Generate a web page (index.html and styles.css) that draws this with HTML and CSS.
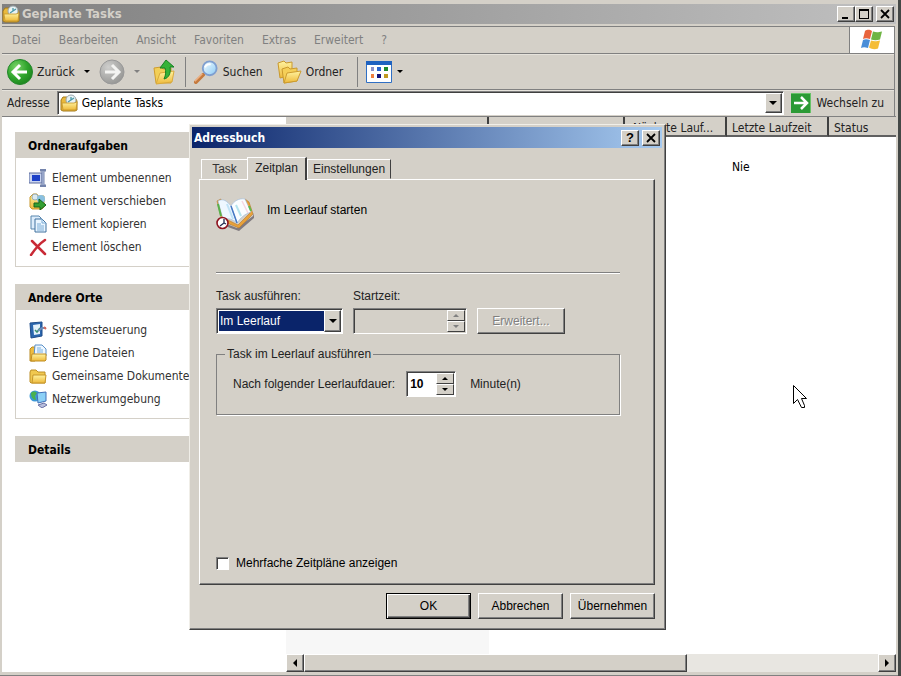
FILE: index.html
```html
<!DOCTYPE html>
<html lang="de">
<head>
<meta charset="utf-8">
<title>Geplante Tasks</title>
<link rel="stylesheet" href="styles.css">
</head>
<body>
<svg class="defs" aria-hidden="true">
  <defs>
    <linearGradient id="gold" x1="0" y1="0" x2="0" y2="1"><stop offset="0" stop-color="#fff3a0"/><stop offset="1" stop-color="#eeb93a"/></linearGradient>
    <radialGradient id="green" cx=".35" cy=".3" r=".8"><stop offset="0" stop-color="#7bd46a"/><stop offset=".55" stop-color="#2fa52c"/><stop offset="1" stop-color="#1a7f1c"/></radialGradient>
    <radialGradient id="grey" cx=".35" cy=".3" r=".8"><stop offset="0" stop-color="#cfcfcd"/><stop offset="1" stop-color="#929290"/></radialGradient>
    <linearGradient id="glass" x1="0" y1="0" x2="1" y2="1"><stop offset="0" stop-color="#f4fcff"/><stop offset="1" stop-color="#8ccbf5"/></linearGradient>
    <symbol id="tasks" viewBox="0 0 18 18">
      <path d="M1 6l2-3h4l1 2h8l1 2v9l-2 1H3l-2-1z" fill="#e9b93c" stroke="#a47a1c"/>
      <circle cx="11" cy="6" r="5" fill="#e8f2f4" stroke="#9aa6ac"/>
      <path d="M11 3v3l-3 2M11 6l3-2" fill="none" stroke="#4b98a8" stroke-width="1.3"/>
      <path d="M2 9h12l3-1-1 8H3z" fill="url(#gold)" stroke="#c4942a" stroke-width=".8"/>
    </symbol>
  </defs>
</svg>
<main class="window">
  <header class="titlebar">
    <svg class="i18"><use href="#tasks"/></svg>
    <h1>Geplante Tasks</h1>
    <div class="captions">
      <button class="cap" aria-label="Minimieren"><svg viewBox="0 0 14 12"><path d="M3 9h6v2H3z"/></svg></button>
      <button class="cap" aria-label="Maximieren"><svg viewBox="0 0 14 12"><path d="M2 1h10v10H2zM3 3v7h8V3z" fill-rule="evenodd"/></svg></button>
      <button class="cap close" aria-label="Schließen"><svg viewBox="0 0 14 12"><path d="M3 2l8 8M11 2l-8 8" stroke="#000" stroke-width="1.8"/></svg></button>
    </div>
  </header>
  <div class="menurow">
    <nav class="menu">
      <button>Datei</button><button>Bearbeiten</button><button>Ansicht</button><button>Favoriten</button><button>Extras</button><button>Erweitert</button><button>?</button>
    </nav>
    <div class="flag">
      <svg viewBox="0 0 24 22">
        <path d="M5 2c3-2 5-1 7 0l-2 8c-3-1-5-1-7 0z" fill="#e8643c"/>
        <path d="M13 2.500c3 1 5 1 9 0l-2 8c-3 1-6 1-9 0z" fill="#6fb544"/>
        <path d="M3 11c2-1 4-1 7 0l-2 8c-3-1-5-1-7 0z" fill="#4a8ed8"/>
        <path d="M11 11.500c3 1 5 1 9 0l-2 8c-3 1-6 1-9-1z" fill="#f5bd35"/>
      </svg>
    </div>
  </div>
  <div class="toolbar">
    <button class="tool"><svg class="i26" viewBox="0 0 26 26"><circle cx="13" cy="13" r="12.500" fill="url(#green)" stroke="#23862a"/><path d="M13 6l-7 7 7 7M7 13h13" fill="none" stroke="#fff" stroke-width="3"/></svg><span>Zurück</span><i class="drop"></i></button>
    <button class="tool forward" aria-label="Vorwärts"><svg class="i26" viewBox="0 0 26 26"><circle cx="13" cy="13" r="12" fill="url(#grey)" stroke="#999"/><path d="M13 6l7 7-7 7M19 13H6" fill="none" stroke="#f4f4f2" stroke-width="3"/></svg><i class="drop dim"></i></button>
    <button class="tool up" aria-label="Aufwärts"><svg class="i26" viewBox="0 0 26 26"><path d="M2 9l7-1 2 2 8-1v15H4z" fill="#f2cf58" stroke="#d09d2e"/><path d="M4 25l4-11 14-2-2 11z" fill="url(#gold)" stroke="#d9aa3c"/><path d="M14 1l8 7h-4c1 6-1 11-6 12 2-4 2-8 1-11H8z" fill="#35b338" stroke="#168022"/></svg></button>
    <span class="sep"></span>
    <button class="tool search"><svg class="i26" viewBox="0 0 26 26"><path d="M2 24l8-8" stroke="#c57a3e" stroke-width="4" stroke-linecap="round"/><path d="M1 23l8-8" stroke="#efb083" stroke-width="1.500"/><circle cx="17" cy="9" r="7.500" fill="url(#glass)" stroke="#7f9fd0" stroke-width="2"/><path d="M12 8c1-3 4-4 6-3" fill="none" stroke="#fff" stroke-width="2"/></svg><span>Suchen</span></button>
    <button class="tool folders"><svg class="i26" viewBox="0 0 26 26"><path d="M2 4l6-2 2 2 6-1v13L4 19z" fill="url(#gold)" stroke="#c9992e"/><path d="M6 10l6-2 2 2 7-1v13L8 24z" fill="#f5cf58" stroke="#c9992e"/><path d="M8 24l3-10 14-2-4 10z" fill="url(#gold)" stroke="#cc9c30"/></svg><span>Ordner</span></button>
    <span class="sep wide"></span>
    <button class="tool views" aria-label="Ansichten"><svg class="i26" viewBox="0 0 26 22"><path d="M.5.5h25v21H.5z" fill="#fff" stroke="#2f6fc4"/><path d="M0 0h26v4H0z" fill="#1e62c0"/><path d="M5 6h3v4H5z" fill="#8a8fc8"/><path d="M11 6h4v4h-4z" fill="#2a66d0"/><path d="M18 6h4v4h-4z" fill="#1d8a2c"/><path d="M5 13h3v4H5z" fill="#f08040"/><path d="M11 13h4v4h-4z" fill="#14147c"/><path d="M18 13h4v4h-4z" fill="#c09a20"/></svg><i class="drop"></i></button>
  </div>
  <div class="address">
    <label for="addr">Adresse</label>
    <div class="addrbox">
      <svg class="i18"><use href="#tasks"/></svg>
      <input id="addr" type="text" value="Geplante Tasks">
      <button class="arrow" aria-label="Adressliste"><i class="tri down"></i></button>
    </div>
    <button class="go"><svg viewBox="0 0 20 20"><path d="M0 0h20v20H0z" fill="#2b9a35"/><path d="M0 0h20v20" fill="none" stroke="#66c267" stroke-width="2"/><path d="M10 4l6 6-6 6M15 10H3" fill="none" stroke="#fff" stroke-width="2.500"/></svg><span>Wechseln zu</span></button>
  </div>
  <div class="content">
    <aside class="side">
      <section class="panel">
        <h2>Ordneraufgaben</h2>
        <ul>
          <li><svg viewBox="0 0 18 18"><path d="M0 4h13v10H0z" fill="#c9d4f0" stroke="#5a6a9c"/><path d="M3 6h8v6H3z" fill="#1c40c8"/><path d="M11 1h6M14 1v16M11 17h6" stroke="#7484ac" stroke-width="3"/><path d="M14 2v14" stroke="#b7c4e4"/></svg><a href="#">Element umbenennen</a></li>
          <li><svg viewBox="0 0 18 18"><path d="M1 5l3-3h4l1 2h6v11l-2 2H3l-2-2z" fill="url(#gold)" stroke="#c9992e"/><circle cx="6" cy="5" r="3" fill="#dbe9ef" stroke="#9ab0ba"/><circle cx="12" cy="7" r="4" fill="#8ac0e0"/><path d="M5 11h5V7l7 6-6 5v-3H5z" fill="#35a032" stroke="#17641b"/></svg><a href="#">Element verschieben</a></li>
          <li><svg viewBox="0 0 18 18"><path d="M2 1h8l2 2v11H2z" fill="#dcecfb" stroke="#5785ad"/><path d="M6 4h7l4 4v9H6z" fill="#e9f5ff" stroke="#3f719e"/><path d="M13 4v4h4M8 9h4M8 11h7M8 13h7M8 15h7" fill="none" stroke="#7bacd6"/></svg><a href="#">Element kopieren</a></li>
          <li><svg viewBox="0 0 18 18"><path d="M3 3c4 4 8 8 13 13M16 2C10 6 6 11 2 17" fill="none" stroke="#c92a36" stroke-width="2.500" stroke-linecap="round"/></svg><a href="#">Element löschen</a></li>
        </ul>
      </section>
      <section class="panel">
        <h2>Andere Orte</h2>
        <ul>
          <li><svg viewBox="0 0 18 18"><path d="M1 2l12-1v14L2 17z" fill="#2a66ae" stroke="#1f4c8a"/><path d="M4 4l7-1v10l-6 1z" fill="#e4f1fb"/><path d="M6 9l2 2 3-4" fill="none" stroke="#37906f" stroke-width="1.500"/><path d="M9 10l4-3h4" fill="none" stroke="#6d8cb8" stroke-width="2"/><path d="M15 6l2 2" stroke="#d76a5a" stroke-width="2"/></svg><a href="#">Systemsteuerung</a></li>
          <li><svg viewBox="0 0 18 18"><path d="M1 5l2-2h3v14H1z" fill="#eebc40" stroke="#b98a22"/><path d="M6 1h7l4 4v7H5z" fill="#eef7ff" stroke="#5a90c8"/><path d="M8 4h4M8 6h6M8 8h6" stroke="#78b0e2"/><path d="M3 10h14v6l-1 1H2z" fill="url(#gold)" stroke="#c08d22"/></svg><a href="#">Eigene Dateien</a></li>
          <li><svg viewBox="0 0 18 18"><path d="M1 5l1-2h5l2 2h7v11H2l-1-1z" fill="#f0c850" stroke="#bd8f26"/><path d="M4 8h13l-1 8H3z" fill="url(#gold)" stroke="#c6962a"/></svg><a href="#">Gemeinsame Dokumente</a></li>
          <li><svg viewBox="0 0 18 18"><circle cx="6" cy="6" r="5.500" fill="#3b98d6"/><path d="M2 3c3-3 5-1 6 0L6 6l1 4c-3 0-5-3-5-7z" fill="#49b150"/><path d="M8 3l9-1v9l-8 2z" fill="#8bd0f6" stroke="#4170b8"/><path d="M9 15l6-2 3 2-5 3z" fill="#b8bedc" stroke="#6971a6"/></svg><a href="#">Netzwerkumgebung</a></li>
        </ul>
      </section>
      <section class="panel"><h2>Details</h2></section>
    </aside>
    <section class="list">
      <table>
        <colgroup><col class="c-name"><col class="c-plan"><col class="c-time"><col class="c-time"><col></colgroup>
        <thead><tr><th></th><th></th><th>Nächste Lauf...</th><th>Letzte Laufzeit</th><th>Status</th></tr></thead>
        <tbody><tr><td></td><td></td><td></td><td>Nie</td><td></td></tr></tbody>
      </table>
      <div class="scroll">
        <button class="sb" aria-label="Nach links"><i class="tri left"></i></button>
        <div class="thumb"></div>
        <div class="track"></div>
        <button class="sb" aria-label="Nach rechts"><i class="tri right"></i></button>
      </div>
    </section>
  </div>
</main>

<form class="dialog" role="dialog" aria-labelledby="dlg">
  <header class="dlgtitle">
    <h2 id="dlg">Adressbuch</h2>
    <div class="captions">
      <button type="button" class="cap help" aria-label="Hilfe">?</button>
      <button type="button" class="cap close" aria-label="Dialog schließen"><svg viewBox="0 0 14 12"><path d="M3 2l8 8M11 2l-8 8" stroke="#000" stroke-width="1.8"/></svg></button>
    </div>
  </header>
  <div class="tabs" role="tablist">
    <button type="button" role="tab">Task</button>
    <button type="button" role="tab" class="active" aria-selected="true">Zeitplan</button>
    <button type="button" role="tab">Einstellungen</button>
  </div>
  <div class="page">
    <div class="summary">
      <svg viewBox="0 0 38 34">
        <path d="M8 26l13 5 16-12 1-3v5L23 34 9 29z" fill="#5d5660" opacity=".7"/>
        <path d="M1 4l4-2 5 20 12 6 12-12-5-14 4 3 4 12-14 14-17-7z" fill="#e8a23a" stroke="#b8752a" stroke-width=".6"/>
        <path d="M2 4c5-3 9 0 13 5l6 17c-4-4-9-5-14-4z" fill="#eef7ff" stroke="#9bb8dc" stroke-width=".6"/>
        <path d="M15 9c3-5 8-8 14-7l6 13c-6 2-10 5-14 11z" fill="#fafdff" stroke="#9bb8dc" stroke-width=".6"/>
        <path d="M15 9l6 17" stroke="#4478c4" stroke-width="1.500"/>
        <path d="M11 7l6 15" stroke="#bfe2f6" stroke-width="2"/>
        <path d="M20 8l5 11" stroke="#b4e4ee" stroke-width="2"/>
        <path d="M26 4l6 12" stroke="#f6d8e4" stroke-width="1.500"/>
        <path d="M2 7l3 12" stroke="#58b04c" stroke-width="2"/>
        <path d="M33 9l2 5" stroke="#5dbb50" stroke-width="2"/>
        <circle cx="6.500" cy="26" r="5.500" fill="#fff" stroke="#8e1420" stroke-width="1.600"/>
        <path d="M8 22v4l-4 3M8 26l2 1" fill="none" stroke="#222a50" stroke-width="1.300"/>
      </svg>
      <p>Im Leerlauf starten</p>
    </div>
    <hr>
    <div class="fields">
      <div class="field kind">
        <label for="kind">Task ausführen:</label>
        <div class="box">
          <select id="kind"><option>Im Leerlauf</option></select>
          <span class="arrow"><i class="tri down"></i></span>
        </div>
      </div>
      <div class="field start">
        <label for="start">Startzeit:</label>
        <div class="box off">
          <input id="start" type="text" disabled>
          <span class="spin"><button type="button" disabled aria-label="Später"><i class="tri mini-up"></i></button><button type="button" disabled aria-label="Früher"><i class="tri mini-down"></i></button></span>
        </div>
      </div>
      <button type="button" class="btn" disabled>Erweitert...</button>
    </div>
    <fieldset>
      <legend>Task im Leerlauf ausführen</legend>
      <label for="mins">Nach folgender Leerlaufdauer:</label>
      <div class="box mins">
        <input id="mins" type="text" value="10">
        <span class="spin"><button type="button" aria-label="Mehr"><i class="tri mini-up"></i></button><button type="button" aria-label="Weniger"><i class="tri mini-down"></i></button></span>
      </div>
      <span>Minute(n)</span>
    </fieldset>
    <div class="multi"><input type="checkbox" id="multi"><label for="multi">Mehrfache Zeitpläne anzeigen</label></div>
  </div>
  <footer>
    <button type="button" class="btn default">OK</button>
    <button type="button" class="btn">Abbrechen</button>
    <button type="button" class="btn">Übernehmen</button>
  </footer>
</form>
<svg class="cursor" viewBox="0 0 14 24" aria-hidden="true"><path d="M.5.5v18l4-4 4 8h3v-2l-3-7h5z" fill="#fff" stroke="#000"/></svg>
</body>
</html>
```
FILE: styles.css
```css
* { box-sizing: border-box; }
:root { --face: #d4d0c8; --shade: #808080; --dark: #404040; }
body {
  margin: 0;
  min-height: 100vh;
  display: flex;
  background: #444846;
  color: #222;
  font: 12px/16px "DejaVu Sans Condensed", "DejaVu Sans", sans-serif;
  overflow: hidden;
}
button, input, select { font: inherit; color: inherit; margin: 0; padding: 0; border: 0; border-radius: 0; background: none; }
h1, h2, p, ul { margin: 0; padding: 0; }
svg { display: block; flex: none; }
.defs { position: absolute; width: 0; height: 0; }
.i18 { width: 18px; height: 18px; }
.i26 { width: 26px; height: 26px; }

.window {
  flex: 1;
  display: flex;
  flex-direction: column;
  margin-right: 3px;
  padding: 4px 2px 3px;
  background: var(--face);
  border-bottom: 1px solid var(--shade);
}
.titlebar {
  display: flex;
  align-items: center;
  gap: 2px;
  height: 20px;
  padding-right: 2px;
  background: linear-gradient(to right, #808080, #c0c0c0);
}
.titlebar h1 { flex: 1; color: var(--face); font-size: 13px; line-height: 20px; }
.captions { display: flex; }
.cap {
  display: flex;
  justify-content: center;
  align-items: center;
  width: 18px;
  height: 16px;
  background: var(--face);
  border: 1px solid;
  border-color: #fff var(--dark) var(--dark) #fff;
  box-shadow: inset -1px -1px var(--shade);
}
.cap svg { width: 14px; height: 12px; }
.close { margin-left: 3px; }
.help { color: #000; font-weight: bold; font-size: 13px; }

.menurow, .toolbar, .address {
  display: flex;
  margin-right: 1px;
  border-top: 1px solid var(--shade);
  border-right: 1px solid var(--shade);
}
.menurow { height: 27px; margin-top: 2px; }
.menu { flex: 1; display: flex; gap: 18px; padding-left: 10px; }
.menu button { color: #808080; }
.flag { width: 45px; display: flex; justify-content: center; align-items: center; background: #fff; border-left: 1px solid var(--shade); }
.flag svg { width: 24px; height: 22px; }
.toolbar { height: 36px; align-items: center; padding-left: 5px; box-shadow: inset 0 1px #e6e3dc; }
.tool { display: flex; align-items: center; gap: 4px; }
.drop { margin-left: 5px; border: 3px solid transparent; border-top-color: #000; border-bottom: 0; }
.dim { border-top-color: var(--shade); }
.forward { margin-left: 9px; }
.up { margin-left: 12px; }
.sep { width: 1px; height: 30px; margin: 0 7px; background: var(--shade); }
.wide { margin: 0 8px 0 14px; }
.folders { margin-left: 13px; }
.sep + .tool .i26 { height: 24px; }
.views { gap: 0; }
.address { height: 27px; align-items: center; gap: 7px; padding: 0 10px 0 5px; box-shadow: inset 0 1px #e6e3dc; }
.addrbox {
  flex: 1;
  display: flex;
  align-items: center;
  gap: 4px;
  height: 24px;
  padding: 1px 1px 1px 2px;
  background: #fff;
  border: 1px solid;
  border-color: var(--shade) #fff #fff var(--shade);
  box-shadow: inset 1px 1px var(--dark);
}
.addrbox input { flex: 1; min-width: 0; color: #000; }
.arrow {
  display: flex;
  justify-content: center;
  align-items: center;
  align-self: stretch;
  width: 17px;
  background: var(--face);
  border: 1px solid;
  border-color: #fff var(--dark) var(--dark) #fff;
  box-shadow: inset -1px -1px var(--shade);
}
.tri { border: 0 solid transparent; }
.down { border-width: 4px 4px 0; border-top-color: #000; }
.left { border-width: 4px 4px 4px 0; border-right-color: #000; }
.right { border-width: 4px 0 4px 4px; border-left-color: #000; }
.mini-up { border-width: 0 3px 3px; border-bottom-color: #000; }
.mini-down { border-width: 3px 3px 0; border-top-color: #000; }
.go { display: flex; align-items: center; gap: 6px; }
.go svg { width: 20px; height: 20px; }

.content { flex: 1; display: flex; background: #fff; border-top: 1px solid var(--shade); }
.side { flex: none; width: 284px; padding: 15px 13px; display: flex; flex-direction: column; gap: 17px; }
.panel h2 { padding: 6px 13px 4px; background: var(--face); color: #000; font-size: 12px; line-height: 16px; }
.panel ul { list-style: none; padding: 8px 13px; border: 1px solid var(--face); border-top: 0; }
.panel li { display: flex; align-items: center; gap: 5px; height: 23px; }
.panel li svg { width: 18px; height: 18px; }
.panel a { color: #333; text-decoration: none; white-space: nowrap; }

.list {
  flex: 1;
  min-width: 0;
  display: flex;
  flex-direction: column;
  justify-content: space-between;
  background: linear-gradient(#f7f7f7, #f7f7f7) no-repeat 0 0 / 203px 100%;
}
table { width: 100%; table-layout: fixed; border-collapse: separate; border-spacing: 0; }
.c-name { width: 203px; }
.c-plan { width: 136px; }
.c-time { width: 102px; }
th, td { padding: 0 0 0 5px; text-align: left; font-weight: normal; white-space: nowrap; overflow: hidden; }
th { height: 20px; padding-top: 5px; line-height: 13px; background: var(--face); border-right: 2px solid var(--dark); border-bottom: 2px solid #606060; }
th:nth-child(3) { padding-left: 8px; }
th:last-child { border-right: 0; }
td { height: 60px; color: #000; }
.scroll { display: flex; height: 18px; background: #e8e6e1; }
.sb, .thumb { background: var(--face); border: 1px solid; border-color: #fff var(--dark) var(--dark) #fff; box-shadow: inset -1px -1px var(--shade); }
.sb { display: flex; justify-content: center; align-items: center; width: 18px; }
.thumb { flex: 382; }
.track { flex: 192; }

.dialog {
  position: absolute;
  left: 189px;
  top: 124px;
  width: 477px;
  padding: 2px 3px 2px 2px;
  background: var(--face);
  border: 1px solid;
  border-color: #f0eee8 var(--dark) var(--dark) #f0eee8;
  box-shadow: inset -1px -1px var(--shade);
  font: 12px/16px "Liberation Sans", Arial, sans-serif;
}
.dlgtitle { display: flex; align-items: center; height: 21px; padding: 0 2px 0 2px; background: linear-gradient(to right, #0a246a, #a6caf0); }
.dlgtitle h2 { flex: 1; color: #fff; font: bold 12px/20px "DejaVu Sans Condensed", "DejaVu Sans", sans-serif; }
.tabs { display: flex; align-items: flex-end; margin: 9px 9px 0; }
.tabs button { height: 20px; padding: 0 5px; background: var(--face); border: 1px solid; border-color: #fff var(--dark) transparent #fff; }
.tabs button:first-child { width: 46px; border-right: 0; color: #333; }
.tabs .active { width: 60px; height: 23px; margin-bottom: -1px; padding-bottom: 3px; z-index: 1; border-right-width: 2px; border-bottom: 0; }
.page {
  display: flex;
  flex-direction: column;
  min-height: 406px;
  margin: 0 7px;
  padding: 17px 34px 13px 16px;
  border: 1px solid;
  border-color: #fff var(--dark) var(--dark) #fff;
  box-shadow: inset -1px -1px var(--shade);
}
.summary { display: flex; gap: 13px; height: 75px; color: #000; }
.summary svg { width: 38px; height: 34px; }
.summary p { padding-top: 5px; }
hr { width: 100%; height: 2px; margin: 0; border: 0; background: linear-gradient(var(--shade) 50%, #fff 50%); }
.fields { display: flex; align-items: flex-end; gap: 10px; margin-top: 14px; }
.field { display: flex; flex-direction: column; gap: 4px; }
.kind { width: 127px; }
.start { width: 114px; }
.box {
  display: flex;
  height: 26px;
  padding: 1px;
  background: #fff;
  border: 1px solid;
  border-color: var(--shade) #fff #fff var(--shade);
  box-shadow: inset 1px 1px var(--dark);
}
.box input, .box select { flex: 1; min-width: 0; width: 0; }
.box.off { background: var(--face); }
.box select { appearance: none; margin: 1px 0 1px 1px; padding-left: 1px; background: #0a246a; color: #fff; }
.spin { display: flex; flex-direction: column; width: 18px; }
.spin button { flex: 1; display: flex; justify-content: center; align-items: center; background: var(--face); border: 1px solid; border-color: #fff var(--dark) var(--dark) #fff; }
.spin button:disabled .mini-up { border-bottom-color: var(--shade); }
.spin button:disabled .mini-down { border-top-color: var(--shade); }
.btn { width: 85px; height: 26px; background: var(--face); border: 1px solid; border-color: #fff var(--dark) var(--dark) #fff; box-shadow: inset -1px -1px var(--shade); color: #000; }
.fields .btn { width: 88px; }
.btn:disabled { color: var(--shade); text-shadow: 1px 1px #fff; }
.default { border-color: #000; box-shadow: inset 1px 1px #fff, inset -1px -1px var(--dark), inset -2px -2px var(--shade); }
fieldset { display: flex; align-items: center; margin: 12px 0 0; padding: 9px 16px 17px; border: 1px solid var(--shade); box-shadow: 1px 1px #fff; min-width: 0; }
legend { margin-left: -8px; padding: 0 2px; }
.mins { width: 50px; margin: 0 14px 0 11px; }
.mins input { padding-left: 2px; color: #000; font-weight: bold; }
.multi { display: flex; align-items: center; gap: 7px; margin-top: auto; color: #000; }
.multi input { appearance: none; width: 13px; height: 13px; background: #fff; border: 1px solid; border-color: var(--shade) #fff #fff var(--shade); box-shadow: inset 1px 1px var(--dark); }
footer { display: flex; justify-content: flex-end; gap: 7px; padding: 8px 7px; }
.cursor { position: absolute; left: 793px; top: 385px; width: 14px; height: 24px; }
```
